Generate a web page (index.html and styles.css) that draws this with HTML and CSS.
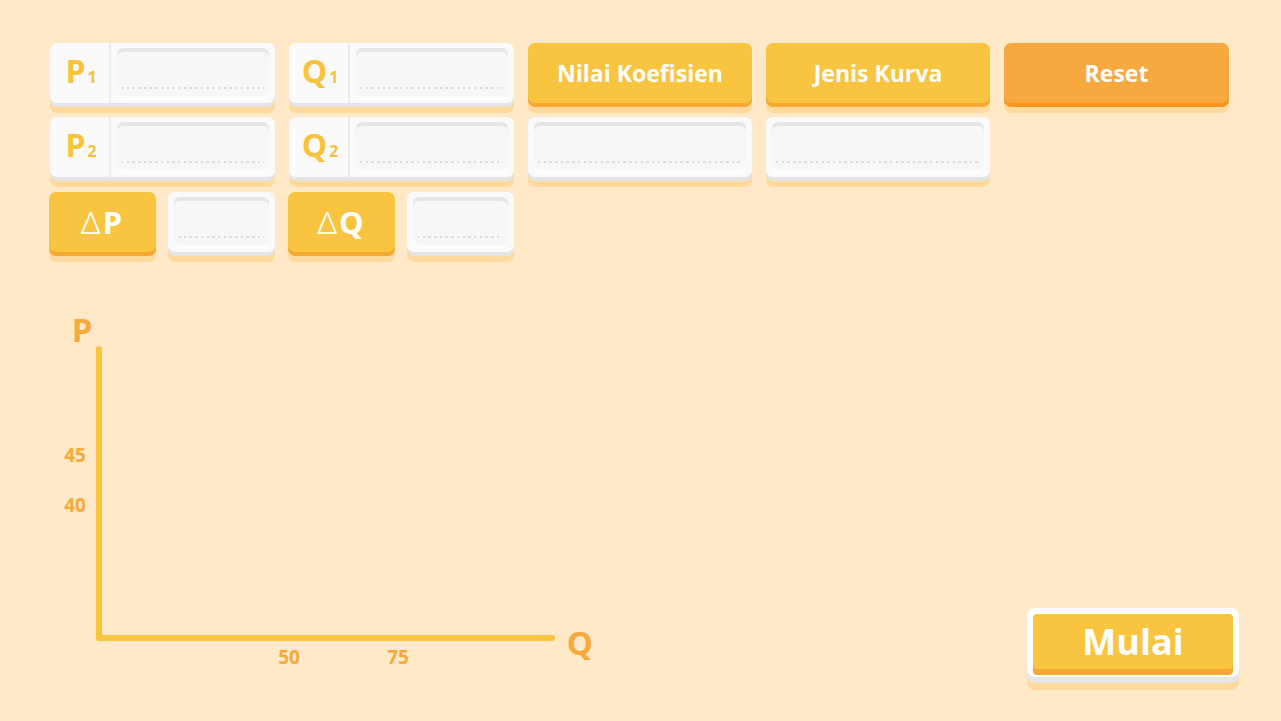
FILE: index.html
```html
<!DOCTYPE html>
<html lang="id">
<head>
<meta charset="utf-8">
<title>Elastisitas</title>
<link rel="stylesheet" href="styles.css">
</head>
<body>
<div class="page">
  <div class="panel">
    <div class="field">
      <div class="field-label">P<span class="sub">1</span></div>
      <div class="field-input"><div class="well"></div></div>
    </div>
    <div class="field">
      <div class="field-label">Q<span class="sub">1</span></div>
      <div class="field-input"><div class="well"></div></div>
    </div>
    <div class="btn">Nilai Koefisien</div>
    <div class="btn">Jenis Kurva</div>
    <div class="btn btn-reset">Reset</div>

    <div class="field">
      <div class="field-label">P<span class="sub">2</span></div>
      <div class="field-input"><div class="well"></div></div>
    </div>
    <div class="field">
      <div class="field-label">Q<span class="sub">2</span></div>
      <div class="field-input"><div class="well"></div></div>
    </div>
    <div class="field field-plain"><div class="well"></div></div>
    <div class="field field-plain"><div class="well"></div></div>
    <div class="empty"></div>

    <div class="pair">
      <div class="btn btn-delta"><span class="delta">Δ</span>P</div>
      <div class="field field-plain"><div class="well"></div></div>
    </div>
    <div class="pair">
      <div class="btn btn-delta"><span class="delta">Δ</span>Q</div>
      <div class="field field-plain"><div class="well"></div></div>
    </div>
  </div>

  <div class="lower">
    <svg class="graph" width="560" height="380" viewBox="0 0 560 380">
      <text class="axis-name" x="32" y="41" text-anchor="middle">P</text>
      <line class="axis" x1="49" y1="48" x2="49" y2="337"/>
      <line class="axis" x1="49" y1="337" x2="502" y2="337"/>
      <text class="axis-name" x="530" y="354" text-anchor="middle">Q</text>
      <text class="tick" x="25" y="161" text-anchor="middle">45</text>
      <text class="tick" x="25" y="211" text-anchor="middle">40</text>
      <text class="tick" x="239" y="363" text-anchor="middle">50</text>
      <text class="tick" x="348" y="363" text-anchor="middle">75</text>
    </svg>
    <div class="start-frame">
      <div class="start-btn">Mulai</div>
    </div>
  </div>
</div>
</body>
</html>
```

FILE: styles.css
```css
html, body {
  margin: 0;
  padding: 0;
}
body {
  background: #FFE9C9;
  font-family: "Open Sans", "Liberation Sans", sans-serif;
  width: 1281px;
  height: 721px;
  overflow: hidden;
}
.page {
  height: 721px;
  box-sizing: border-box;
  padding: 43px 42px 0 50px;
  display: flex;
  flex-direction: column;
}
.panel {
  display: grid;
  grid-template-columns: 225px 225px 224px 224px 225px;
  grid-template-rows: 60px 61px 61px;
  column-gap: 14px;
  row-gap: 14px;
  width: 1180px;
}
.field {
  background: #FAFAFA;
  border-radius: 7px;
  box-shadow: 0 4px 0 #E4E4E4, 0 10px 0 #FFDA9C;
  display: flex;
  height: 60px;
  box-sizing: border-box;
}
.field-label {
  width: 61px;
  flex: none;
  border-right: 2px solid #EBEBEB;
  color: #F8C33C;
  font-weight: 700;
  font-size: 32px;
  display: flex;
  align-items: baseline;
  justify-content: center;
  padding-left: 3px;
  padding-top: 6px;
  box-sizing: border-box;
  line-height: 44px;
}
.sub {
  font-size: 16px;
  margin-left: 2px;
}
.field-input {
  flex: 1;
  padding: 5px 6px 3px 6px;
  display: flex;
}
.field-plain {
  padding: 5px 6px 3px 6px;
}
.well {
  flex: 1;
  border-radius: 6px;
  background: #F7F7F7;
  box-shadow: inset 0 4px 0 #E6E6E6, inset 0 -4px 0 #FDFDFD;
  position: relative;
}
.well::after {
  content: "";
  position: absolute;
  left: 4px;
  right: 5px;
  bottom: 11px;
  height: 2px;
  background-image: repeating-linear-gradient(90deg, #DBDBDB 0 2.5px, transparent 2.5px 5.7px);
  border-radius: 1px;
}
.btn {
  background: #F9C43F;
  border-radius: 7px;
  box-shadow: 0 4px 0 #F7A733, 0 10px 0 #FFDA9C;
  color: #FFFFFF;
  font-weight: 700;
  font-size: 23px;
  display: flex;
  align-items: center;
  justify-content: center;
  height: 60px;
}
.btn-reset {
  background: #F7A93F;
  box-shadow: 0 4px 0 #F7951C, 0 10px 0 #FFDA9C;
}
.pair {
  display: flex;
  gap: 12px;
  margin-left: -1px;
}
.pair .btn {
  width: 107px;
  flex: none;
}
.pair .field {
  flex: 1;
  display: flex;
}
.btn-delta {
  font-size: 31px;
  padding-right: 2px;
  align-items: baseline;
  padding-top: 10px;
  box-sizing: border-box;
  line-height: 40px;
}
.delta {
  font-family: "Noto Sans", "DejaVu Sans", sans-serif;
  font-weight: 300;
  font-size: 32px;
  margin-right: 2px;
}
.lower {
  flex: 1;
  display: flex;
  justify-content: space-between;
  align-items: flex-start;
}
.graph {
  display: block;
  margin-top: 48px;
  margin-left: 0;
}
.axis {
  stroke: #F9C43F;
  stroke-width: 6;
  stroke-linecap: round;
}
.axis-name {
  fill: #F7A93A;
  font-family: "Open Sans", "Liberation Sans", sans-serif;
  font-weight: 700;
  font-size: 33px;
}
.tick {
  fill: #F7A93A;
  font-family: "Open Sans", "Liberation Sans", sans-serif;
  font-weight: 700;
  font-size: 19px;
}
.start-frame {
  align-self: flex-end;
  margin-bottom: 44px;
  background: #FFFFFF;
  border-radius: 8px;
  padding: 6px 6px 2px 6px;
  box-shadow: 0 6px 0 #E6E6E6, 0 13px 0 #FFDA9C;
}
.start-btn {
  width: 200px;
  height: 55px;
  background: #F9C43F;
  border-radius: 4px;
  box-shadow: 0 6px 0 #F7A733;
  margin-bottom: 6px;
  color: #FFFFFF;
  font-weight: 700;
  font-size: 36px;
  display: flex;
  align-items: center;
  justify-content: center;
  line-height: 1;
}
```
